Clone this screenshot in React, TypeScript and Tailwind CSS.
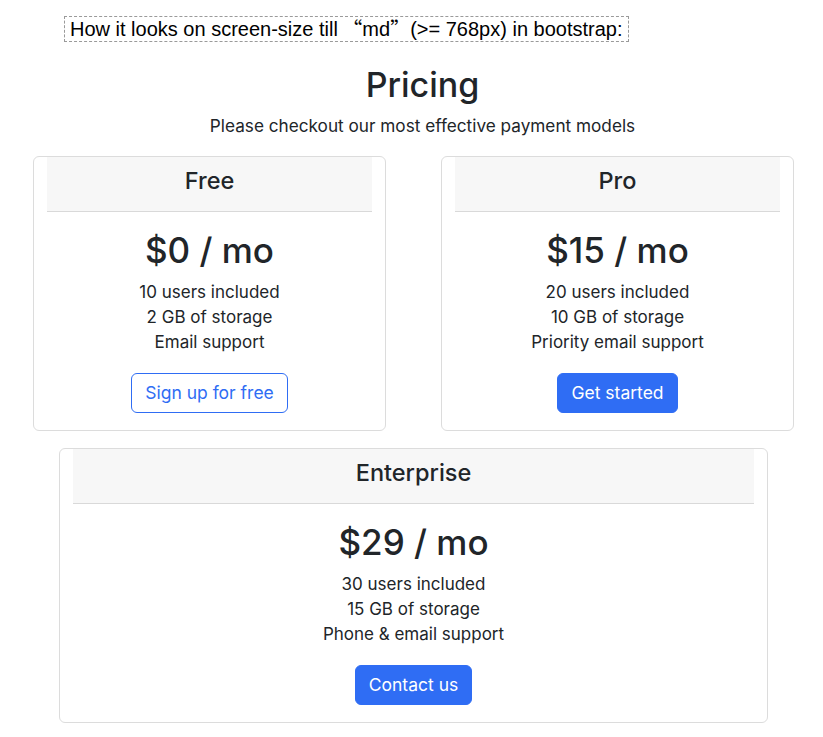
const plans = [
  {
    name: "Free",
    price: "$0",
    features: ["10 users included", "2 GB of storage", "Email support"],
    cta: "Sign up for free",
    outline: true,
  },
  {
    name: "Pro",
    price: "$15",
    features: ["20 users included", "10 GB of storage", "Priority email support"],
    cta: "Get started",
    outline: false,
  },
  {
    name: "Enterprise",
    price: "$29",
    features: ["30 users included", "15 GB of storage", "Phone & email support"],
    cta: "Contact us",
    outline: false,
  },
];

type Plan = (typeof plans)[number];

function PlanCard({ plan, className }: { plan: Plan; className?: string }) {
  return (
    <div
      className={`flex flex-col items-stretch rounded-[6px] border border-[#dcdcdc] bg-white ${className ?? ""}`}
    >
      {/* Header */}
      <div className="mx-[13px] flex h-[55px] items-center justify-center border-b border-[#d9d9d9] bg-[#f7f7f7] pb-[7px]">
        <h4 className="text-[23.5px] font-medium text-[#212529]">{plan.name}</h4>
      </div>

      {/* Body */}
      <div className="flex flex-col items-center pt-[15px] pb-[17px]">
        <h1 className="text-[35px] leading-[46px] font-medium text-[#212529]">
          {plan.price} / mo
        </h1>
        <ul className="mt-[7px] text-center text-[17px] leading-[25px] text-[#212529]">
          {plan.features.map((f) => (
            <li key={f}>{f}</li>
          ))}
        </ul>
        <button
          className={
            plan.outline
              ? "mt-[18px] h-[40px] rounded-[6px] border border-[#2f6df4] bg-white px-[13px] text-[17.5px] text-[#2f6df4]"
              : "mt-[18px] h-[40px] rounded-[6px] border border-[#2f6df4] bg-[#2f6df4] px-[13px] text-[17.5px] text-white"
          }
        >
          {plan.cta}
        </button>
      </div>
    </div>
  );
}

export default function App() {
  return (
    <div className="min-h-[737px] w-[823px] bg-white font-['Inter','Noto_Sans',sans-serif]">
      {/* Caption */}
      <div className="pt-[16px] pl-[64px]">
        <div className="inline-flex h-[26px] items-center border border-dashed border-[#9a9a9a] px-[5px] font-['Liberation_Sans',Arial,sans-serif] text-[20px] leading-none text-black">
          How it looks on screen-size till
          <span className="font-['Noto_Sans_CJK_SC',sans-serif]">&nbsp;“</span>md
          <span className="font-['Noto_Sans_CJK_SC',sans-serif]">”</span>(&gt;= 768px) in bootstrap:
        </div>
      </div>

      {/* Title */}
      <div className="mt-[20px] flex flex-col items-center pl-[22px] text-[#212529]">
        <h1 className="text-[34px] leading-[46px] font-medium">Pricing</h1>
        <p className="mt-[6px] text-[17.2px] leading-[24px]">
          Please checkout our most effective payment models
        </p>
      </div>

      {/* Cards */}
      <div className="mx-[33px] mt-[18px] w-[761px]">
        <div className="grid grid-cols-2 gap-[55px]">
          <PlanCard plan={plans[0]} />
          <PlanCard plan={plans[1]} />
        </div>
        <div className="mt-[17px] px-[26px]">
          <PlanCard plan={plans[2]} />
        </div>
      </div>
    </div>
  );
}
